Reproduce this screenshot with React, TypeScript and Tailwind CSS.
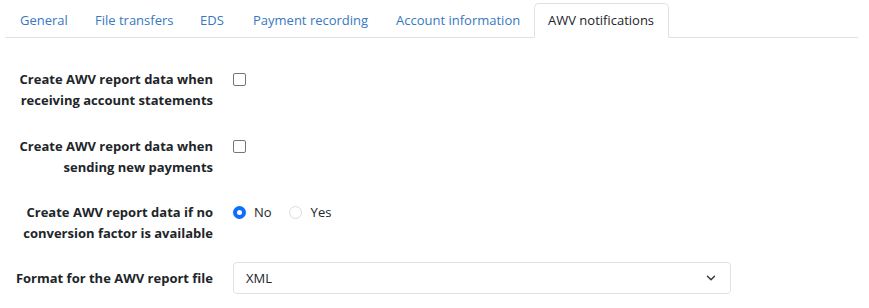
import { ChevronDown } from 'lucide-react';

const tabs = [
  { label: 'General', width: 'w-[75px]' },
  { label: 'File transfers', width: 'w-[105px]' },
  { label: 'EDS', width: 'w-[53px]' },
  { label: 'Payment recording', width: 'w-[143px]' },
  { label: 'Account information', width: 'w-[153px]' },
];

function Checkbox() {
  return <span className="mt-[4px] block h-[13px] w-[13px] rounded-[2px] border border-[#767676] bg-white" />;
}

export default function App() {
  return (
    <div className="h-[308px] w-[869px] bg-white font-['Segoe_UI','Open_Sans',sans-serif] text-[13px] text-[#212529]">
      <div className="ml-[5px] mr-[11px] flex pt-[3px] border-b border-[#dee2e6] h-[38px]">
        {tabs.map((t) => (
          <div key={t.label} className={`${t.width} pl-[15px] pt-[8px] text-[#3778c2] whitespace-nowrap`}>
            {t.label}
          </div>
        ))}
        <div className="-mb-px h-[35px] w-[135px] rounded-t-[5px] border border-b-white border-[#dee2e6] bg-white pl-[13px] pt-[7px] text-[#212529] whitespace-nowrap">
          AWV notifications
        </div>
      </div>

      <div className="mt-[31px] grid grid-cols-[213px_1fr] gap-x-[20px] leading-[21px]">
        <div className="text-right font-bold whitespace-nowrap">
          Create AWV report data when
          <br />
          receiving account statements
        </div>
        <div>
          <Checkbox />
        </div>

        <div className="mt-[25px] text-right font-bold whitespace-nowrap">
          Create AWV report data when
          <br />
          sending new payments
        </div>
        <div className="mt-[25px]">
          <Checkbox />
        </div>

        <div className="mt-[24px] text-right font-bold whitespace-nowrap">
          Create AWV report data if no
          <br />
          conversion factor is available
        </div>
        <div className="mt-[24px] flex items-start">
          <span className="mt-[4px] flex h-[13px] w-[13px] items-center justify-center rounded-full bg-[#0d6efd]">
            <span className="h-[5px] w-[5px] rounded-full bg-white" />
          </span>
          <span className="ml-[8px]">No</span>
          <span className="ml-[17px] mt-[4px] block h-[13px] w-[13px] rounded-full border border-[#dcdcdc] bg-white" />
          <span className="ml-[9px]">Yes</span>
        </div>

        <div className="mt-[18px] flex items-center justify-end font-bold whitespace-nowrap">
          Format for the AWV report file
        </div>
        <div className="mt-[18px]">
          <div className="flex h-[32px] w-[498px] items-center justify-between rounded-[4px] border border-[#dee2e6] pl-[12px] pr-[12px]">
            <span>XML</span>
            <ChevronDown className="h-[14px] w-[14px] text-[#343a40]" strokeWidth={2.5} />
          </div>
        </div>
      </div>
    </div>
  );
}
